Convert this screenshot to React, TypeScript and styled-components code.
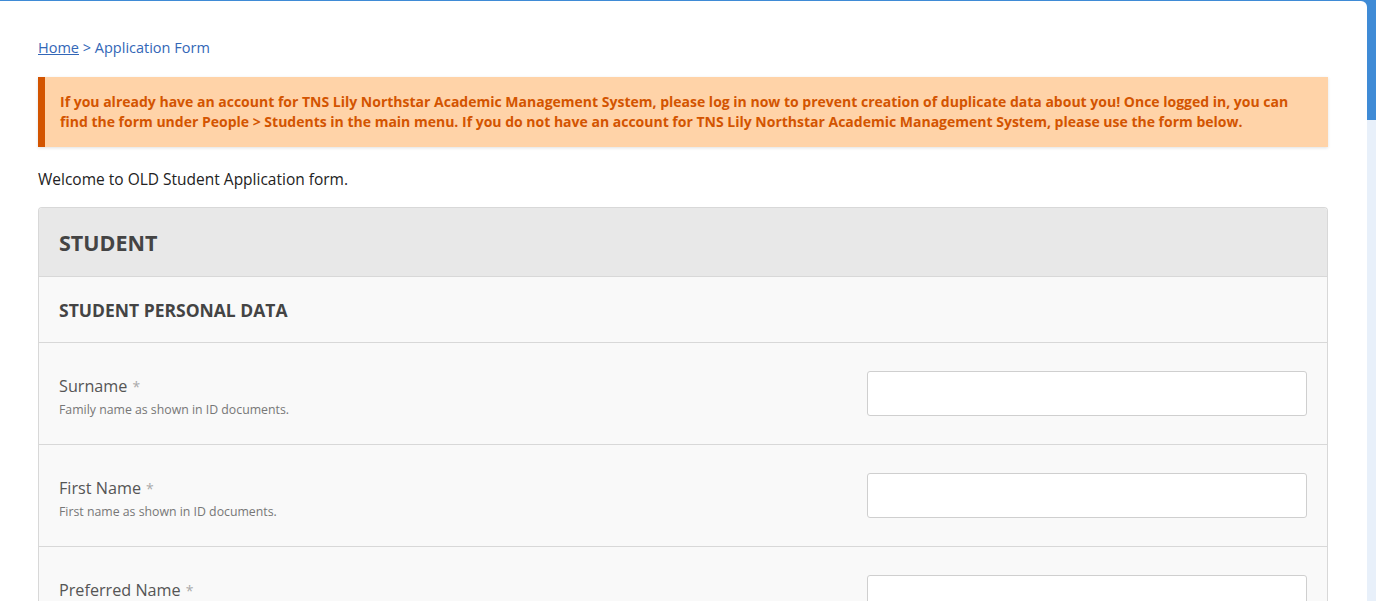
import React from "react";
import styled, { createGlobalStyle } from "styled-components";

const GlobalStyle = createGlobalStyle`
  html, body {
    margin: 0;
    padding: 0;
    height: 100%;
  }
  body {
    background: linear-gradient(#3f8bd6 0, #3f8bd6 120px, #e8f0fa 120px);
    font-family: "Open Sans", "Noto Sans", sans-serif;
    color: #222;
    overflow: hidden;
  }
`;

const Page = styled.div`
  width: 1367px;
  margin-top: 1px;
  min-height: 600px;
  background: #fff;
  border-top-right-radius: 6px;
  box-sizing: border-box;
  padding: 37px 39px 0 38px;
`;

const Breadcrumb = styled.div`
  font-size: 14.5px;
  line-height: 20px;
  color: #3367b7;
  margin-bottom: 19px;

  a {
    color: #3367b7;
    text-decoration: underline;
  }
`;

const Alert = styled.div`
  background: #ffd3a8;
  border-left: 7px solid #d35400;
  color: #d35400;
  font-weight: 700;
  font-size: 14px;
  line-height: 20px;
  padding: 15px;
  box-shadow: 0 1px 3px rgba(0, 0, 0, 0.12);
`;

const Intro = styled.p`
  font-size: 15.5px;
  line-height: 20px;
  margin: 22px 0 18px;
`;

const FormTable = styled.div`
  border: 1px solid #d8d8d8;
  border-bottom: none;
  border-radius: 4px 4px 0 0;
  overflow: hidden;
`;

const SectionHeading = styled.div`
  background: #e8e8e8;
  padding: 0 20px;
  height: 68px;
  display: flex;
  align-items: center;
  font-size: 21.5px;
  font-weight: 700;
  color: #444;
  border-bottom: 1px solid #d8d8d8;
`;

const SubHeading = styled.div`
  background: #f9f9f9;
  padding: 0 20px;
  height: 65px;
  display: flex;
  align-items: center;
  font-size: 17.5px;
  font-weight: 700;
  color: #444;
  text-transform: uppercase;
  border-bottom: 1px solid #d8d8d8;
`;

const Row = styled.div`
  background: #f9f9f9;
  display: flex;
  align-items: center;
  justify-content: space-between;
  height: 101px;
  padding: 0 20px;
  border-bottom: 1px solid #d8d8d8;
`;

const LabelBlock = styled.div`
  display: flex;
  flex-direction: column;
  padding-top: 5px;
`;

const Label = styled.label`
  font-size: 16.2px;
  line-height: 26px;
  color: #555;
`;

const Required = styled.span`
  color: #aaa;
  font-size: 14px;
  margin-left: 5px;
`;

const Description = styled.span`
  font-size: 12.3px;
  line-height: 20px;
  color: #777;
`;

const Input = styled.input`
  width: 440px;
  height: 45px;
  box-sizing: border-box;
  border: 1px solid #cfcfcf;
  border-radius: 3px;
  background: #fff;
  font-size: 14px;
  padding: 0 10px;
`;

type Field = {
  label: string;
  description?: string;
};

const fields: Field[] = [
  { label: "Surname", description: "Family name as shown in ID documents." },
  { label: "First Name", description: "First name as shown in ID documents." },
  { label: "Preferred Name" },
];

export default function App() {
  return (
    <>
      <GlobalStyle />
      <Page>
        <Breadcrumb>
          <a href="#">Home</a> &gt; Application Form
        </Breadcrumb>
        <Alert>
          If you already have an account for TNS Lily Northstar Academic Management System,
          please log in now to prevent creation of duplicate data about you! Once logged in, you
          can find the form under People &gt; Students in the main menu. If you do not have an
          account for TNS Lily Northstar Academic Management System, please use the form below.
        </Alert>
        <Intro>Welcome to OLD Student Application form.</Intro>
        <FormTable>
          <SectionHeading>STUDENT</SectionHeading>
          <SubHeading>Student Personal Data</SubHeading>
          {fields.map((f) => (
            <Row key={f.label}>
              <LabelBlock>
                <Label>
                  {f.label}
                  <Required>*</Required>
                </Label>
                <Description>{f.description ?? "\u00a0"}</Description>
              </LabelBlock>
              <Input type="text" />
            </Row>
          ))}
        </FormTable>
      </Page>
    </>
  );
}
